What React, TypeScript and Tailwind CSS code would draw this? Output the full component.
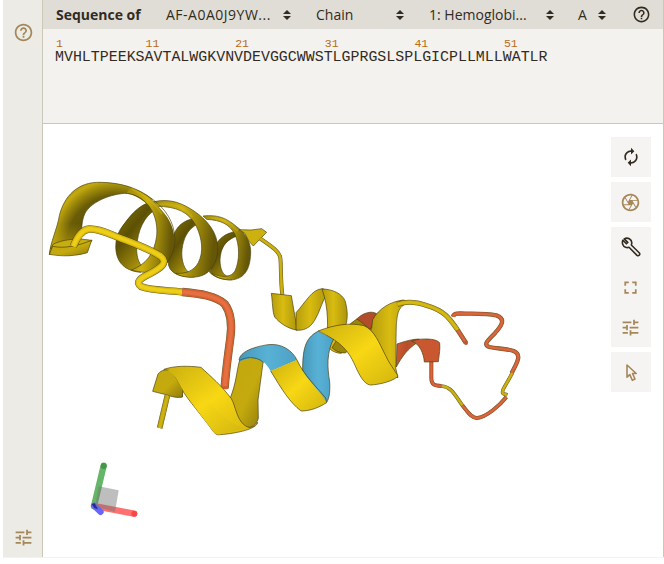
import type { ReactNode } from "react";
import { MdAutorenew, MdFullscreen, MdHelpOutline, MdOutlineCamera, MdTune } from "react-icons/md";

const SEQUENCE = "MVHLTPEEKSAVTALWGKVNVDEVGGCWWSTLGPRGSLSPLGICPLLMLLWATLR";
const MARKERS = [1, 11, 21, 31, 41, 51];

function SelectArrows() {
  return (
    <svg viewBox="0 0 8 10" className="h-[10px] w-2 shrink-0" fill="#332b1f">
      <path d="M4 0 8 4H0ZM0 6h8L4 10Z" />
    </svg>
  );
}

function Select({ label, className }: { label: string; className: string }) {
  return (
    <div className={`flex shrink-0 items-center justify-between ${className}`}>
      <span className="whitespace-nowrap">{label}</span>
      <SelectArrows />
    </div>
  );
}

function ToolGroup({ children }: { children: ReactNode }) {
  return <div className="flex w-10 flex-col bg-[#f5f4f3] text-[#a58759]">{children}</div>;
}

function ToolButton({ children, dark }: { children: ReactNode; dark?: boolean }) {
  return (
    <button className={`flex size-10 items-center justify-center pr-px ${dark ? "text-[#332b1f]" : ""}`}>{children}</button>
  );
}

function Tube({ d, color, width }: { d: string; color: string; width: number }) {
  return (
    <g fill="none" strokeLinejoin="round">
      <path d={d} stroke="#51430c" strokeOpacity="0.85" strokeWidth={width + 2} />
      <path d={d} stroke={color} strokeWidth={width - 1} />
      <path d={d} stroke="#3a2c00" strokeOpacity="0.14" strokeWidth={width - 1} />
      <path d={d} stroke={color} strokeWidth={width * 0.6} />
      <path d={d} stroke="#ffffff" strokeOpacity="0.04" strokeWidth={width * 0.3} />
    </g>
  );
}

function Protein() {
  return (
    <svg viewBox="9 -138 1860 1299" className="block h-[433px] w-[620px]">
      <defs>
        <radialGradient id="arch" gradientUnits="userSpaceOnUse" cx="225" cy="220" r="205">
          <stop offset="0.5" stopColor="#5f5205" />
          <stop offset="0.7" stopColor="#6b5d07" />
          <stop offset="0.83" stopColor="#9b870b" />
          <stop offset="0.93" stopColor="#c4aa0e" />
          <stop offset="1" stopColor="#a8930c" />
        </radialGradient>
        <linearGradient id="foot" x1="0" y1="0" x2="0" y2="1">
          <stop offset="0" stopColor="#bfa50e" stopOpacity="0" />
          <stop offset="1" stopColor="#bfa50e" stopOpacity="0.85" />
        </linearGradient>
        <linearGradient id="front" x1="0" y1="0" x2="1" y2="0.15">
          <stop offset="0" stopColor="#a08b0b" />
          <stop offset="0.45" stopColor="#cdb110" />
          <stop offset="0.72" stopColor="#9e890b" />
          <stop offset="1" stopColor="#655707" />
        </linearGradient>
        <linearGradient id="back" x1="0" y1="0" x2="0.7" y2="1">
          <stop offset="0" stopColor="#8d7b09" />
          <stop offset="0.45" stopColor="#5c5005" />
          <stop offset="0.75" stopColor="#927e0a" />
          <stop offset="1" stopColor="#c5aa0e" />
        </linearGradient>
        <linearGradient id="ribbon" x1="0" y1="0" x2="1" y2="1">
          <stop offset="0" stopColor="#cbb00f" />
          <stop offset="0.5" stopColor="#f8d714" />
          <stop offset="1" stopColor="#d2b50f" />
        </linearGradient>
        <linearGradient id="ribbonBack" x1="0" y1="0" x2="1" y2="1">
          <stop offset="0" stopColor="#c2a80e" />
          <stop offset="0.55" stopColor="#c5aa0e" />
          <stop offset="1" stopColor="#8e7b09" />
        </linearGradient>
        <linearGradient id="far" x1="0" y1="0" x2="1" y2="0">
          <stop offset="0" stopColor="#b69d0e" />
          <stop offset="0.45" stopColor="#d9bc10" />
          <stop offset="1" stopColor="#ac950d" />
        </linearGradient>
        <linearGradient id="blue" x1="0" y1="0" x2="1" y2="0">
          <stop offset="0" stopColor="#4698ba" />
          <stop offset="0.5" stopColor="#58b2d6" />
          <stop offset="1" stopColor="#4ca0c4" />
        </linearGradient>
        <linearGradient id="red" x1="0" y1="0" x2="1" y2="0.2">
          <stop offset="0" stopColor="#d65b31" />
          <stop offset="0.5" stopColor="#b44e2b" />
          <stop offset="1" stopColor="#d35d34" />
        </linearGradient>
      </defs>

      {/* upper helix, far turns first */}
      <g stroke="#4c410a" strokeWidth="2" strokeLinejoin="round">
        <path fill="url(#back)" d="M600 185C570 183 540 200 530 222C522 250 523 286 508 306C524 323 547 330 576 329L566 319C548 318 540 295 540 270C542 232 557 207 603 194Z" />
        <path fill="url(#back)" d="M464 145C430 151 409 169 400 199C382 240 383 268 386 287C394 312 420 321 462 321L447 308C428 294 421 257 428 226C434 196 449 174 472 163Z" />
        <path fill="url(#back)" d="M340 94C305 102 280 121 241 178C222 208 223 256 242 279C254 294 272 304 301 307L316 296C299 287 289 266 290 232C293 183 310 140 350 116Z" />
        <path fill="url(#front)" d="M489 138C535 133 560 145 590 170C616 189 634 218 632 250C630 301 612 327 572 330C552 330 529 323 515 310C549 324 574 322 585 303C599 273 600 225 584 192C568 162 543 151 500 148Z" />
        <path fill="url(#front)" d="M342 95C393 84 429 101 465 125C505 153 531 189 533 229C534 272 519 297 496 312C470 327 428 324 407 310C438 312 462 302 475 278C491 246 487 207 469 169C447 127 412 109 348 109Z" />
        <path fill="url(#arch)" stroke="none" d="M28 254C30 221 53 172 58 137C72 80 112 34 183 37C240 38 292 52 338 88L340 125C322 95 280 70 253 70C198 75 150 101 135 130C124 152 126 180 122 207L115 219L73 246Z" />
        <path fill="url(#foot)" stroke="none" d="M28 254C30 221 45 190 52 160L124 160C124 185 126 192 115 219L73 246Z" />
        <path fill="url(#front)" stroke="none" d="M270 53C311 65 352 101 374 131C398 160 407 196 402 230C396 276 369 296 344 306C327 309 304 308 274 300C318 284 343 251 350 198C354 157 341 122 319 99C302 82 285 72 260 70Z" />
        <path fill="none" d="M28 254C30 221 53 172 58 137C72 80 112 34 183 37C240 38 292 52 338 88C377 117 403 156 405 208C402 255 384 285 344 306C327 309 304 308 274 300C318 284 343 251 350 198C354 157 341 122 319 99C302 82 280 70 253 70C198 75 150 101 135 130C124 152 126 180 122 195" />
        <path fill="#c8ad0f" d="M40 222C70 209 98 207 122 207L156 211L144 228L32 236Z" />
        <path fill="url(#ribbonBack)" d="M28 253L38 229C72 236 110 229 155 211L142 248C105 259 67 260 28 253Z" />
        <path fill="#cdb20f" d="M597 179L633 180L665 176L680 187L661 206L640 228L627 214L615 190Z" />
      </g>
      <path d="M275 56C310 73 346 101 366 132M350 104C402 95 438 116 457 141M512 143C554 145 580 166 593 183" fill="none" stroke="#dcc013" strokeOpacity="0.35" strokeWidth="6" />

      <Tube d="M660 205C689 226 718 242 721 264C724 288 721 325 727 375" color="#c9af0e" width={10} />
      <Tube d="M100 229C110 204 125 179 147 177C180 175 214 195 240 204C287 222 331 238 361 258C387 278 360 295 330 311C300 325 285 337 304 350C330 361 378 361 427 366" color="#edcd12" width={20} />
      <Tube d="M427 366C480 371 527 377 554 402C574 429 577 460 571 504C563 563 557 605 554 654" color="#e66b3b" width={23} />
      <ellipse cx="554" cy="653" rx="12" ry="5" fill="#cf5d34" />

      {/* rear loop and right-hand coil */}
      <Tube d="M1239 440C1242 429 1255 430 1278 431C1312 431 1342 430 1369 436C1400 447 1383 469 1366 488C1345 510 1327 524 1348 531C1371 537 1395 534 1421 543C1445 553 1434 574 1415 609" color="#d8643a" width={11} />
      <Tube d="M1417 609L1391 655C1382 675 1393 671 1402 675" color="#cdb10f" width={9} />
      <Tube d="M1399 681C1379 707 1338 742 1311 744C1294 745 1282 724 1267 706" color="#d8643a" width={10} />
      <Tube d="M1267 706C1240 667 1231 650 1204 648" color="#cab00f" width={9} />
      <Tube d="M1174 573L1174 623C1174 645 1184 647 1204 648" color="#d76038" width={10} />

      <g stroke="#4a3e0a" strokeWidth="2" strokeLinejoin="round">
        <path fill="url(#far)" d="M694 370L754 377L772 481C741 475 718 458 704 441C697 424 698 398 694 370Z" />
        <path fill="url(#far)" d="M768 428C799 394 815 359 846 356C854 356 861 364 862 371C844 397 841 423 824 451C809 475 790 483 768 480Z" />
        <path fill="url(#far)" d="M846 357C878 357 907 372 915 392C926 428 924 465 906 487L904 550C890 550 874 543 862 530C862 469 868 419 846 357Z" />
        <path fill="#9c8609" d="M876 533C890 512 907 476 949 448L1003 457L989 482C955 512 930 540 915 549C898 549 887 543 876 533Z" />
        <path fill="#b24c29" d="M950 447C976 422 1006 422 1014 436L990 479C975 465 965 456 950 447Z" />
        <path fill="url(#far)" d="M998 449C1017 415 1051 395 1090 390L1119 399C1076 399 1072 427 1069 464C1067 518 1069 561 1067 594L1074 623C1031 609 986 555 994 482Z" />
        <path fill="url(#red)" d="M1071 522C1096 513 1119 507 1138 507L1130 519C1105 536 1087 557 1069 591Z" />
        <path fill="#c95730" d="M1130 509C1162 504 1193 508 1199 519C1201 535 1198 551 1195 575L1153 576C1151 550 1138 520 1115 514Z" />
        <path fill="url(#ribbonBack)" d="M598 574C617 555 646 563 670 571L654 690L655 745C650 768 623 781 601 774C577 754 562 717 572 681C588 640 590 604 598 574Z" />
        <path fill="url(#ribbon)" d="M372 598C403 587 444 587 483 592C514 621 543 645 574 686C586 706 590 748 613 765C628 778 643 772 653 757C651 776 594 790 540 794C532 796 527 792 521 786C487 738 444 690 426 659L427 681C400 681 379 671 372 656Z" />
        <path fill="url(#ribbonBack)" d="M354 612C365 598 381 597 396 604L429 658L427 681C411 684 397 681 382 675L338 664Z" />
        <path fill="url(#ribbon)" stroke="none" d="M398 599C427 601 453 631 466 649C501 690 549 756 612 774L542 793C531 795 527 792 521 786C477 727 435 675 417 640C405 617 398 610 380 599Z" />
        <path fill="url(#blue)" stroke="none" d="M597 570C601 545 639 531 684 524C726 519 757 542 771 570L692 604C679 579 659 560 631 564C618 567 610 570 597 574Z" />
        <path fill="url(#ribbon)" stroke="none" d="M692 603L771 569C789 612 833 655 857 684L860 698C836 713 811 723 783 723C749 697 724 656 692 603Z" />
        <path fill="url(#blue)" stroke="none" d="M788 602C788 544 793 504 834 484L881 507C859 547 862 594 869 635C871 669 867 686 860 697C845 669 804 631 788 602Z" />
        <path fill="url(#ribbon)" d="M834 483C885 464 928 457 972 467C1004 481 1017 519 1035 553C1047 580 1063 599 1074 618C1065 631 1022 644 991 645C973 643 959 618 945 586C923 536 896 512 834 483Z" />
      </g>

      <path d="M597 570C601 545 639 531 684 524C726 519 757 542 771 570C789 612 833 655 857 684L860 698C836 713 811 723 783 723C749 697 724 656 692 603M788 602C788 544 793 504 834 484M881 507C859 547 862 594 869 635C871 669 867 686 860 697" fill="none" stroke="#443d13" strokeWidth="2" />
      <path d="M597 572C629 553 662 567 670 578" fill="none" stroke="#306d84" strokeWidth="3" />
      <Tube d="M382 677L359 774" color="#cbb00e" width={15} />
      <Tube d="M1072 403C1100 393 1132 397 1161 407C1214 423 1227 443 1253 480" color="#d4b80f" width={13} />
      <Tube d="M1253 480L1278 519" color="#d5633a" width={12} />
      <circle cx="1278" cy="519" r="6" fill="#bb5632" />

      {/* orientation axes */}
      <g strokeLinecap="round" fill="none">
        <path d="M162 1009L191 887" stroke="#65b666" strokeWidth="19" />
        <path d="M168 1009L282 1031" stroke="#ff7070" strokeWidth="19" />
        <path d="M162 1007L182 1026" stroke="#6666fa" strokeWidth="18" />
      </g>
      <path d="M176 949L236 961L225 1026L165 1010Z" fill="#777777" fillOpacity="0.48" />
      <circle cx="191" cy="888" r="9" fill="#449649" />
      <circle cx="283" cy="1031" r="9" fill="#fa4548" />
      <path d="M155 1002L164 1000L174 1018L163 1014Z" fill="#2c2795" />
    </svg>
  );
}

export default function App() {
  return (
    <div className="h-[564px] w-[664px] overflow-hidden bg-white pl-[3px] font-['Open_Sans','Noto_Sans',sans-serif] text-[#332b1f]">
      <div className="flex h-[558px] border-b border-[#f3f2ee]">
        <aside className="flex w-10 shrink-0 flex-col items-center justify-between border-r border-[#ccc8b8] bg-[#ecebe6] pt-[22px] pb-[9px] pl-[2px] text-[#a58759]">
          <MdHelpOutline size={21} />
          <MdTune size={21} />
        </aside>
        <main className="flex w-[621px] flex-col border-r border-[#ccc8b8]">
          <header className="flex h-[29px] shrink-0 items-center bg-[#dfddd5] pl-[13px] text-[14px]">
            <span className="w-[110px] shrink-0 font-bold">Sequence of</span>
            <Select label="AF-A0A0J9YW..." className="w-[125px] tracking-[0.5px]" />
            <Select label="Chain" className="ml-[25px] w-[88px]" />
            <Select label="1: Hemoglobi..." className="ml-[25px] w-[125px]" />
            <Select label="A" className="ml-6 w-7" />
            <MdHelpOutline size={19} className="ml-[26px]" />
          </header>
          <section className="h-[95px] shrink-0 border-b border-[#ccc8b8] bg-[#f3f2ee] pt-[9px] pl-3 font-['Liberation_Mono',monospace]">
            <div className="flex h-3 text-[11.5px] leading-3 text-[#b66b16]">
              {MARKERS.map((n) => (
                <span key={n} className="w-[89.6px] shrink-0 pl-px">{n}</span>
              ))}
            </div>
            <div className="text-[14.93px] leading-[15px]">{SEQUENCE}</div>
          </section>
          <div className="relative h-[433px] bg-white">
            <Protein />
            <div className="absolute top-[13px] right-3 flex flex-col gap-[5px]">
              <ToolGroup>
                <ToolButton dark><MdAutorenew size={20} /></ToolButton>
              </ToolGroup>
              <ToolGroup>
                <ToolButton><MdOutlineCamera size={21} /></ToolButton>
              </ToolGroup>
              <ToolGroup>
                <ToolButton dark>
                  <svg viewBox="0 0 20 20" className="size-5" fill="none" stroke="currentColor" strokeWidth="1.6" strokeLinejoin="round">
                    <path d="M3.2 1.9 6.8 5.4 5.4 6.8 1.9 3.2C.6 6 2 9.5 4.5 10.3 5.8 10.8 7 10.7 8 10.3L16 18.4Q17.2 19.2 18.2 18.2 19.2 17.2 18.4 16L10.3 8C11.3 5.5 10.3 3 8.3 1.8 6.7.9 4.8 1 3.2 1.9Z" />
                  </svg>
                </ToolButton>
                <ToolButton><MdFullscreen size={21} /></ToolButton>
                <ToolButton><MdTune size={21} /></ToolButton>
              </ToolGroup>
              <ToolGroup>
                <ToolButton>
                  <svg viewBox="0 0 20 20" className="size-5" fill="none" stroke="currentColor" strokeWidth="1.6" strokeLinejoin="round">
                    <path d="M6 3V15.2L8.8 12.6 11.3 18.3 14 17 11.5 11.5H15.2Z" />
                  </svg>
                </ToolButton>
              </ToolGroup>
            </div>
          </div>
        </main>
      </div>
    </div>
  );
}
